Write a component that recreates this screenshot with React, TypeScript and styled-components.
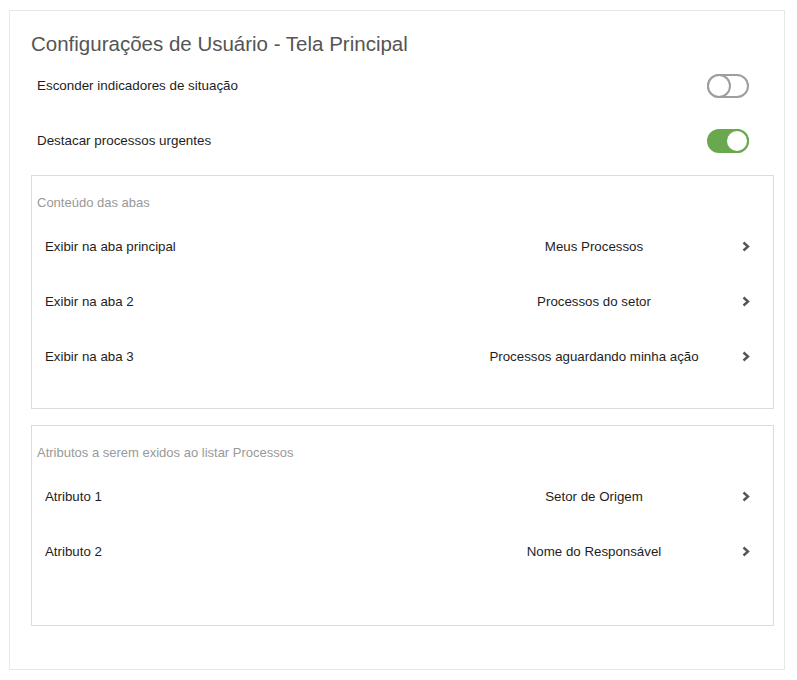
import React, { useState } from "react";
import styled, { createGlobalStyle } from "styled-components";

const GlobalStyle = createGlobalStyle`
    body {
        margin: 0;
        background: #ffffff;
        font-family: "Liberation Sans", Arial, sans-serif;
    }
`;

const Card = styled.div`
    box-sizing: border-box;
    width: 776px;
    height: 660px;
    margin: 10px 0 0 9px;
    padding: 21px 10px 0 21px;
    border: 1px solid #e8e8e8;
    display: flex;
    flex-direction: column;
`;

const Title = styled.h1`
    margin: 0 0 2px;
    font-size: 20.5px;
    line-height: 24px;
    font-weight: normal;
    color: #555555;
`;

const ToggleRow = styled.div`
    height: 55px;
    display: flex;
    align-items: center;
    justify-content: space-between;
    padding: 0 25px 0 6px;
    font-size: 13.4px;
    color: #1e1e1e;
`;

const Track = styled.button<{ $on: boolean }>`
    position: relative;
    box-sizing: border-box;
    width: 42px;
    height: 24px;
    padding: 0;
    border-radius: 12px;
    border: 2px solid ${(p) => (p.$on ? "#6aa84f" : "#9e9e9e")};
    background: ${(p) => (p.$on ? "#6aa84f" : "#ffffff")};
    cursor: pointer;
`;

const Knob = styled.span<{ $on: boolean }>`
    position: absolute;
    top: -2px;
    left: ${(p) => (p.$on ? "16px" : "-2px")};
    box-sizing: border-box;
    width: 24px;
    height: 24px;
    border-radius: 50%;
    background: #ffffff;
    border: 2px solid ${(p) => (p.$on ? "#6aa84f" : "#9e9e9e")};
`;

const Section = styled.section<{ $bottom: number; $first?: boolean }>`
    margin-top: ${(p) => (p.$first ? 7 : 16)}px;
    border: 1px solid #dcdcdc;
    padding: 19px 23px ${(p) => p.$bottom}px 0;
`;

const SectionTitle = styled.div`
    padding-left: 5px;
    margin-bottom: 8px;
    font-size: 13px;
    line-height: 16px;
    color: #999999;
`;

const ItemRow = styled.div`
    height: 55px;
    display: grid;
    grid-template-columns: 1fr 232px 40px;
    align-items: center;
    padding-left: 13px;
    font-size: 13.3px;
    color: #1e1e1e;
    cursor: pointer;
`;

const Value = styled.span`
    text-align: center;
    white-space: nowrap;
`;

const Chevron = styled.svg`
    justify-self: end;
`;

type Item = { label: string; value: string };

const Toggle = ({ on, onClick }: { on: boolean; onClick: () => void }) => (
    <Track $on={on} onClick={onClick}>
        <Knob $on={on} />
    </Track>
);

const ItemList = ({ title, items, bottom, first }: { title: string; items: Item[]; bottom: number; first?: boolean }) => (
    <Section $bottom={bottom} $first={first}>
        <SectionTitle>{title}</SectionTitle>
        {items.map((it) => (
            <ItemRow key={it.label}>
                <span>{it.label}</span>
                <Value>{it.value}</Value>
                <Chevron width="8" height="11" viewBox="0 0 8 11">
                    <path d="M1.5 1.5 L6 5.5 L1.5 9.5" fill="none" stroke="#555" strokeWidth="2.4" />
                </Chevron>
            </ItemRow>
        ))}
    </Section>
);

const abas: Item[] = [
    { label: "Exibir na aba principal", value: "Meus Processos" },
    { label: "Exibir na aba 2", value: "Processos do setor" },
    { label: "Exibir na aba 3", value: "Processos aguardando minha ação" },
];

const atributos: Item[] = [
    { label: "Atributo 1", value: "Setor de Origem" },
    { label: "Atributo 2", value: "Nome do Responsável" },
];

export default function App() {
    const [hide, setHide] = useState(false);
    const [urgent, setUrgent] = useState(true);

    return (
        <>
            <GlobalStyle />
            <Card>
                <Title>Configurações de Usuário - Tela Principal</Title>
                <ToggleRow>
                    Esconder indicadores de situação
                    <Toggle on={hide} onClick={() => setHide(!hide)} />
                </ToggleRow>
                <ToggleRow>
                    Destacar processos urgentes
                    <Toggle on={urgent} onClick={() => setUrgent(!urgent)} />
                </ToggleRow>
                <ItemList title="Conteúdo das abas" items={abas} bottom={24} first />
                <ItemList title="Atributos a serem exidos ao listar Processos" items={atributos} bottom={46} />
            </Card>
        </>
    );
}
